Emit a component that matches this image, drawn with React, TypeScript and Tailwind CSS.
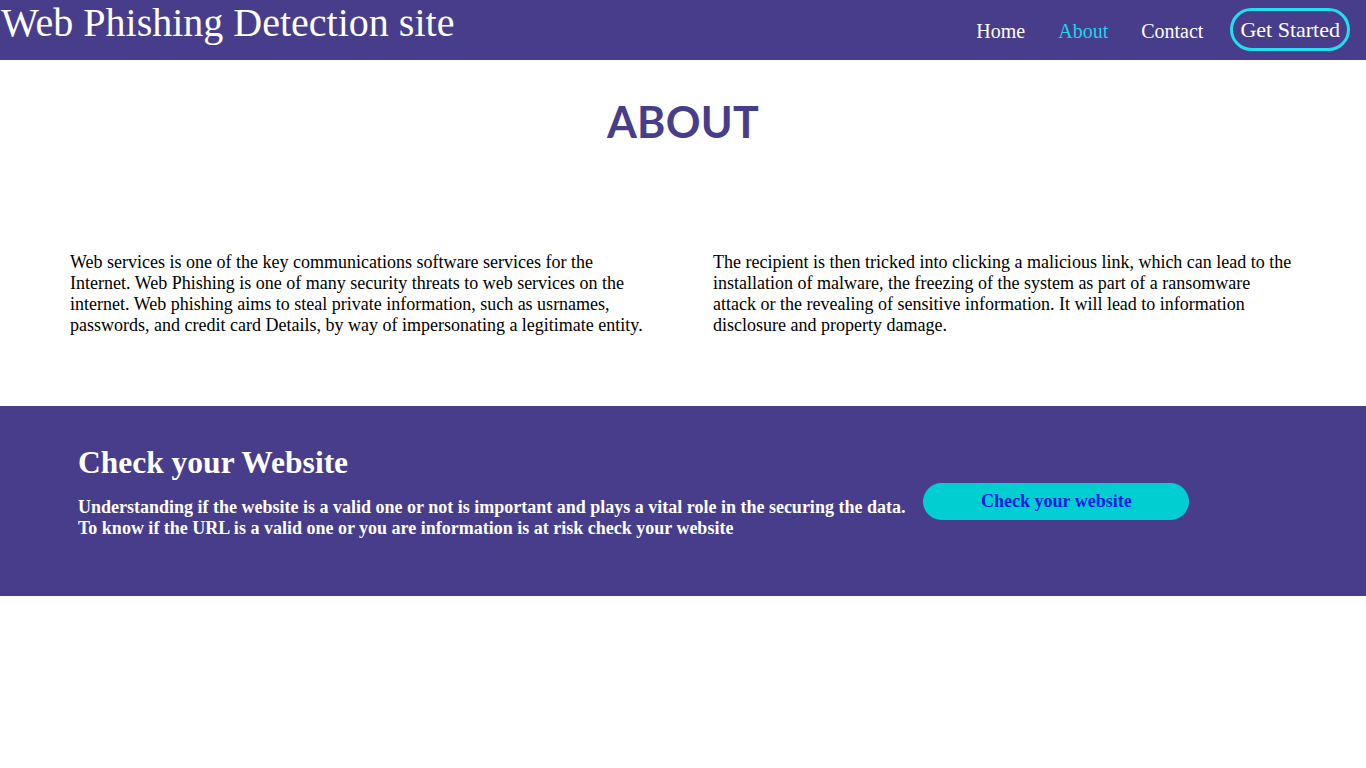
import React from "react";

export default function App() {
  return (
    <div className="w-full bg-white">
      <header className="flex h-[60px] items-start justify-between bg-[#483D8B]">
        <h1 className="mt-[0px] pl-[1px] text-[40px] leading-[46px] text-white font-['Liberation_Serif',serif]">
          Web Phishing Detection site
        </h1>
        <nav className="flex items-center gap-[33px] pr-[16px] pt-[8px] font-['Liberation_Serif',serif] text-[20px]">
          <a className="mt-[3px] text-white">Home</a>
          <a className="mt-[3px] text-[#22d3ee]">About</a>
          <a className="mt-[3px] text-white">Contact</a>
          <a className="ml-[-6px] flex h-[43px] items-center rounded-[22px] border-[3px] border-[#1fe0f0] px-[7px] text-[22px] text-white">
            Get Started
          </a>
        </nav>
      </header>

      <section className="pt-[37px] pb-[70px]">
        <h2 className="text-center text-[43px] font-bold leading-[50px] tracking-[0.3px] text-[#483D8B] font-['Lato',sans-serif]">
          ABOUT
        </h2>
        <div className="mt-[105px] grid grid-cols-2 gap-[60px] px-[70px] font-['Liberation_Serif',serif] text-[18px] leading-[21px] text-black">
          <p>
            Web services is one of the key communications software services for the Internet. Web Phishing is one of
            many security threats to web services on the internet. Web phishing aims to steal private information, such
            as usrnames, passwords, and credit card Details, by way of impersonating a legitimate entity.
          </p>
          <p>
            The recipient is then tricked into clicking a malicious link, which can lead to the installation of malware,
            the freezing of the system as part of a ransomware attack or the revealing of sensitive information. It will
            lead to information disclosure and property damage.
          </p>
        </div>
      </section>

      <section className="flex h-[190px] items-start bg-[#483D8B] px-[78px] pt-[40px]">
        <div className="text-white">
          <h3 className="text-[31.5px] font-bold leading-[34px] font-['Liberation_Serif',serif]">Check your Website</h3>
          <p className="mt-[17px] font-['Liberation_Serif',serif] text-[18px] font-bold leading-[21px]">
            Understanding if the website is a valid one or not is important and plays a vital role in the securing the
            data.
            <br />
            To know if the URL is a valid one or you are information is at risk check your website
          </p>
        </div>
        <div className="ml-[18px] mt-[37px]">
          <button className="h-[37px] w-[266px] rounded-full bg-[#00CED1] font-['Liberation_Serif',serif] text-[18px] font-bold text-[#0a1adf]">
            Check your website
          </button>
        </div>
      </section>
    </div>
  );
}
